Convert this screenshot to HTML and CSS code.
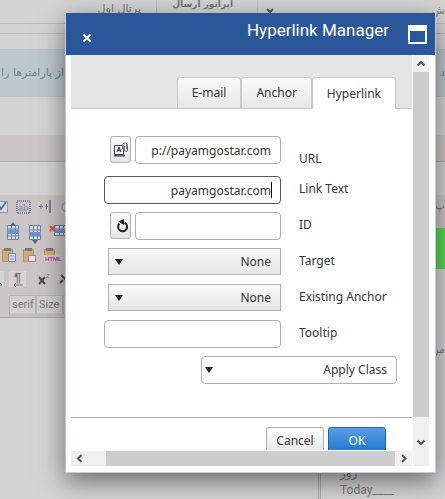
FILE: index.html
```html
<!DOCTYPE html>
<html lang="fa">
<head>
<meta charset="utf-8">
<title>Hyperlink Manager</title>
<link rel="stylesheet" href="styles.css">
</head>
<body>
<main class="page">
  <div class="topbar" dir="rtl">
    <span class="top-item top-edge">ش</span>
    <svg class="top-chevron" viewBox="0 0 8 6"><path d="M1 1l3 3 3-3"/></svg>
    <strong class="top-item top-operator">اپراتور ارسال</strong>
    <span class="top-item top-portal">پرتال اول</span>
  </div>
  <div class="strip"></div>
  <div class="notice"><span dir="rtl">از پارامترها را</span><span>د</span></div>
  <div class="section-bar"></div>
  <div class="editor">
    <div class="tools">
      <svg class="tool-icons" viewBox="0 0 66 100">
        <g fill="none" stroke="#9297a3">
          <path d="M-4 6.500H7.500V17.500H-4" fill="#d8dade"/>
          <path d="M-2 9l3 5 5-7" stroke="#596e9d" stroke-width="2"/>
          <rect x="17" y="6" width="13" height="12" stroke="#6f7fa3" stroke-width="2" stroke-dasharray="1 1"/>
          <path d="M50 5V18" stroke="#7d8190" stroke-width="2"/>
          <path d="M39 11.500h4M45 11.500h3M41 9v5M46.500 9v5" stroke="#6476a8"/>
          <circle cx="67" cy="12" r="5"/>
        </g>
        <text x="18" y="16" class="glyph-ab">ab</text>
        <g stroke="#72809a">
          <path d="M7.500 30.500h11v14h-11zM29.500 30.500h11v14h-11zM54.500 30.500h12v10h-12z" fill="#d4dce4"/>
          <path d="M7 34h12M7 41h12M11.500 31v14M15.500 31v14M29 35h12M29 41h12M33.500 31v14M37.500 31v14M54 34h12M59.500 31v10M63.500 31v10" fill="none"/>
        </g>
        <path d="M7 35h12v4H7zM29 37h12v4H29zM54 35h13v3H54z" fill="#6d91ce"/>
        <path d="M13 27l3 4h-6zM35 49l3-4h-6z" fill="#4c6690"/>
        <path d="M50 31l5 5M55 31l-5 5" stroke="#d35842" stroke-width="2"/>
        <g fill="#d1af72" stroke="#ae9362">
          <path d="M2.500 54.500h10v12h-10zM23.500 54.500h10v12h-10zM44.500 54.500h10v12h-10z"/>
        </g>
        <path d="M4 53h7v3H4zM25 53h7v3h-7zM46 53h7v3h-7z" fill="#777c80"/>
        <path d="M8.500 58.500h7v8h-7z" fill="#dce5f0" stroke="#6b86ad"/>
        <path d="M10 61h4M10 64h4" stroke="#6b86ad"/>
        <path d="M28.500 60.500h7v6h-7z" fill="#eee0ec" stroke="#ae77b1"/>
        <path d="M44 60h16v7H44z" fill="#d4c9d3"/>
        <text x="45" y="66" class="glyph-html">HTML</text>
        <path d="M-5 76H4V92H-5zM9 76h17v16H9z" fill="#d3d3d1"/>
        <path d="M-3 90h5l-2-2" fill="none" stroke="#555"/>
        <text x="14" y="87" class="glyph-para">¶</text>
        <path d="M14 90h9m-9 0l2-2m-2 2l2 2" fill="none" stroke="#777"/>
        <path d="M39 82l6 7m0-7l-6 7M61 80l6 6M63 85l-3 3" stroke="#4c4c4c" stroke-width="2"/>
        <text x="46" y="83" class="glyph-sup">2</text>
      </svg>
      <div class="font-boxes"><span>serif</span><span>Size</span><span></span></div>
    </div>
    <div class="right-label" dir="rtl">پ</div>
  </div>
  <div class="green-tile"></div>
  <div class="lower"><p class="lower-note" dir="rtl">من</p>
    <div class="calendar"><span class="day" dir="rtl">روز</span><span>Today____</span></div>
  </div>
</main>

<section class="dialog" role="dialog" aria-labelledby="dialog-title">
  <header class="titlebar">
    <button class="close" type="button" aria-label="Close"><svg viewBox="0 0 10 10"><path d="M1.500 1.500l7 7M8.500 1.500l-7 7"/></svg></button>
    <h1 id="dialog-title">Hyperlink Manager</h1>
    <button class="maximize" type="button" aria-label="Maximize"></button>
  </header>
  <div class="frame">
    <div class="pane">
      <div class="tabs" role="tablist">
        <button type="button" class="tab" role="tab">E-mail</button>
        <button type="button" class="tab" role="tab">Anchor</button>
        <button type="button" class="tab selected" role="tab" aria-selected="true">Hyperlink</button>
      </div>
      <form class="form">
        <div class="field first">
          <div class="control">
            <button class="icon-button" type="button" aria-label="Document manager">
              <svg viewBox="0 0 16 16"><path d="M1.500 3.500h9v9h-9z" fill="#f4f6f8" stroke="#43484f"/><path d="M1 13.500h11" stroke="#555" stroke-width="2"/><path d="M4 10l2-5 2 5M4.500 8.500h3" fill="none" stroke="#23272e"/><path d="M9.500 7V3.500a2 2 0 0 1 5 0V8a1.500 1.500 0 0 1-3 0V4" fill="none" stroke="#5b6266"/><path d="M13.500 2v5" stroke="#3c8cc0"/><path d="M10.500 4v3" stroke="#db9a45"/></svg>
            </button>
            <input class="box short" id="url" type="text" value="p://payamgostar.com">
          </div>
          <label for="url">URL</label>
        </div>
        <div class="field">
          <div class="control caret"><input class="box focused" id="linktext" type="text" value="payamgostar.com"></div>
          <label for="linktext">Link Text</label>
        </div>
        <div class="field">
          <div class="control">
            <button class="icon-button reset" type="button" aria-label="Reset">
              <svg viewBox="0 0 16 16"><path d="M10.500 4.700a4.500 4.500 0 1 1-5 .8" fill="none" stroke="#222" stroke-width="2"/><path d="M4 3.500L10 1v6z" fill="#222"/></svg>
            </button>
            <input class="box short" id="id" type="text">
          </div>
          <label for="id">ID</label>
        </div>
        <div class="field">
          <div class="control"><span class="drop"><select id="target" dir="rtl"><option>None</option></select></span></div>
          <label for="target">Target</label>
        </div>
        <div class="field">
          <div class="control"><span class="drop"><select id="anchor" dir="rtl"><option>None</option></select></span></div>
          <label for="anchor">Existing Anchor</label>
        </div>
        <div class="field">
          <div class="control"><input class="box" id="tooltip" type="text"></div>
          <label for="tooltip">Tooltip</label>
        </div>
        <div class="class-row"><span class="drop plain"><select aria-label="Apply Class" dir="rtl"><option>Apply Class</option></select></span></div>
      </form>
      <footer class="actions">
        <button class="action" type="button">Cancel</button>
        <button class="action primary" type="button">OK</button>
      </footer>
    </div>
    <div class="vscroll" aria-hidden="true">
      <svg viewBox="0 0 16 17"><path d="M4.500 10.500L8 7l3.500 3.500"/></svg>
      <div class="thumb"></div>
      <svg class="down" viewBox="0 0 16 49"><path d="M4.500 23.500L8 27l3.500-3.500"/></svg>
    </div>
    <div class="hscroll" aria-hidden="true">
      <svg class="left" viewBox="0 0 35 15"><path d="M10.500 4L7 7.500 10.500 11"/></svg>
      <div class="thumb"></div>
      <svg class="right" viewBox="0 0 17 15"><path d="M7 4l3.500 3.500L7 11"/></svg>
    </div>
  </div>
</section>
</body>
</html>
```
FILE: styles.css
```css
* { box-sizing: border-box; }

body {
  margin: 0;
  min-height: 100vh;
  overflow: hidden;
  background: #d4d4d4;
  color: #333;
  font: 12px/18px "Noto Sans", sans-serif;
}

button, input, select { font: inherit; color: inherit; margin: 0; }

svg { display: block; }

/* Dimmed page behind the dialog */
.page {
  display: flex;
  flex-direction: column;
  height: 100vh;
  color: #777;
  font-family: "DejaVu Sans", sans-serif;
  font-size: 11px;
}

.topbar {
  display: flex;
  height: 24px;
  border-bottom: 1px solid #bcbcbc;
  overflow: hidden;
}

.top-edge { width: 171px; padding-top: 2px; }
.top-chevron { width: 8px; height: 6px; margin: 8px 0 0 8px; fill: none; stroke: #555; stroke-width: 2; }
.top-item { white-space: nowrap; }
.top-operator { width: 102px; padding-right: 24px; border-left: 1px solid #bcbcbc; border-right: 1px solid #c8c8c8; font-size: 9px; line-height: 8px; }
.top-portal { padding: 0 15px; }

.strip { height: 10px; border-bottom: 1px solid #bcbcbc; }

.notice {
  display: flex;
  justify-content: space-between;
  align-items: center;
  height: 48px;
  margin-top: 15px;
  border-block: 1px solid #b0c4c9;
  background: #bdc8cd;
  color: #6d8793;
  white-space: nowrap;
}

.notice span:first-child { width: 64px; }

.section-bar {
  height: 27px;
  margin-top: 38px;
  border-bottom: 1px solid #aaa;
  background: #cbc6c5;
}

.editor {
  display: flex;
  justify-content: space-between;
  height: 33px;
  margin-top: 33px;
  background: #cbc6c5;
}

.tools { width: 66px; height: 123px; border-bottom: 1px solid #aaa5a5; background: #cbc6c5; flex: none; }
.tool-icons { width: 66px; height: 100px; overflow: hidden; }
.glyph-ab { font: 11px "Liberation Serif", serif; fill: #7482a8; }
.glyph-html { font: bold 6px "Liberation Sans", sans-serif; fill: #a14394; }
.glyph-para { font: bold 13px "Liberation Sans", sans-serif; fill: #777; }
.glyph-sup { font: 6px "Liberation Sans", sans-serif; fill: #596e9d; }
.font-boxes { display: flex; padding-left: 9px; font: 11px/18px Roboto, sans-serif; }
.font-boxes span { width: 27px; height: 20px; padding-left: 2px; border: 1px solid #b7b5b4; background: #d1d0cf; flex: none; }
.font-boxes span:last-child { width: 21px; }
.right-label { width: 9px; padding-top: 2px; white-space: nowrap; }
.green-tile { align-self: flex-end; width: 10px; height: 41px; background: #5ad858; }
.lower { display: flex; flex-direction: column; flex: 1; align-items: flex-end; }
.lower-note { margin: 72px 0 0; }
.calendar {
  display: flex;
  flex: 1;
  flex-direction: column;
  justify-content: flex-end;
  width: 127px;
  padding-left: 19px;
  border-left: 3px double #aaa;
  font: 12px/17px Roboto, sans-serif;
}
.day { align-self: flex-start; font-family: "DejaVu Sans", sans-serif; }

/* Dialog */
.dialog {
  position: absolute;
  inset: 13px 9px 26px 65px;
  display: flex;
  flex-direction: column;
  border: 1px solid #bfcdd6;
  border-top: 0;
  background: #fff;
  box-shadow: 0 8px 24px rgba(0, 0, 0, .5);
}

.titlebar {
  display: flex;
  align-items: flex-start;
  height: 42px;
  padding: 12px 8px 0 15px;
  background: #2a579a;
  color: #fff;
}

.titlebar h1 {
  flex: 1;
  margin: -5px 19px 0 0;
  font: 17px/20px Roboto, sans-serif;
  text-align: right;
}

.close { width: 12px; height: 26px; padding: 0 1px; border: 0; background: none; }
.close svg { width: 10px; height: 10px; fill: none; stroke: #fff; stroke-width: 2; }
.maximize { width: 19px; height: 19px; padding: 0; border: 2px solid #fff; border-top-width: 6px; background: none; }

.frame {
  display: grid;
  grid-template: minmax(0, 1fr) 15px / minmax(0, 1fr) 16px;
  gap: 1px;
  flex: 1;
  min-height: 0;
  padding: 0 6px 6px 5px;
}

.pane { overflow: hidden; }

.tabs {
  display: flex;
  justify-content: flex-end;
  align-items: flex-end;
  height: 54px;
  padding-right: 16px;
  border-bottom: 1px solid #c8c8c8;
  background: #e5e5e5;
}

.tab {
  height: 31px;
  padding: 0 14px;
  border: 1px solid #c8c8c8;
  border-bottom: 0;
  border-radius: 3px 3px 0 0;
  background: linear-gradient(#fafafa, #e6e6e6);
}

.tab.selected { height: 32px; margin-bottom: -1px; background: #fff; }

.form { display: grid; gap: 8px; padding-top: 27px; }
.field { display: grid; grid-template-columns: 1fr 113px; gap: 18px; align-items: center; }
.field label { padding-bottom: 2px; }
.field.first { align-items: end; height: 32px; }
.field.first label { padding-bottom: 0; }
.field.first .control { align-self: start; }
.control { display: flex; justify-content: flex-end; gap: 4px; }

.box {
  width: 177px;
  height: 28px;
  padding: 0 9px;
  border: 1px solid #b0b0b0;
  border-radius: 4px;
  outline: 0;
  background: #fff;
  text-align: right;
}

.box.short { width: 146px; }
.box.focused { border-color: #555; }

.caret { position: relative; }
.caret::after { content: ""; position: absolute; top: 6px; right: 9px; width: 1px; height: 16px; background: #000; }

.icon-button {
  display: grid;
  place-items: center;
  width: 21px;
  height: 27px;
  padding: 0;
  border: 1px solid #b0b0b0;
  border-radius: 3px;
  background: linear-gradient(#fafafa, #e6e6e6);
}

.icon-button svg { width: 16px; height: 16px; }
.icon-button.reset { justify-items: end; }

.drop { position: relative; width: 173px; height: 27px; }
.drop select {
  width: 100%;
  height: 100%;
  padding: 0 9px;
  appearance: none;
  border: 1px solid #b0b0b0;
  border-radius: 0;
  background: linear-gradient(#fafafa, #e6e6e6);
}
.drop::after {
  content: "";
  position: absolute;
  left: 7px;
  top: 11px;
  border: 4px solid transparent;
  border-top: 6px solid #222;
  border-bottom: 0;
  pointer-events: none;
}
.control:has(.drop) { height: 28px; }
.drop.plain { width: 196px; height: 28px; }
.drop.plain::after { left: 4px; }
.drop.plain select { border-radius: 4px; background: #fff; }
.class-row { display: flex; justify-content: flex-end; padding-right: 15px; }

.actions {
  display: flex;
  justify-content: flex-end;
  gap: 4px;
  margin-top: 33px;
  padding: 9px 26px 0 0;
  border-top: 1px solid #b0b0b0;
}

.action {
  width: 58px;
  height: 28px;
  padding: 0;
  border: 1px solid #b0b0b0;
  border-radius: 3px;
  background: linear-gradient(#fdfdfd, #e6e6e6);
}

.action.primary { border-color: #1b65b5; background: linear-gradient(#5a9de0, #1b74d2); color: #fff; }

.vscroll, .hscroll { display: flex; background: #f0f0f0; }
.vscroll { grid-row: 1 / 3; grid-column: 2; flex-direction: column; }
.hscroll { grid-row: 2; grid-column: 1; }
.thumb { flex: 1; background: #cdcdcd; }
.vscroll svg, .hscroll svg { flex: none; width: 16px; height: 17px; fill: none; stroke: #555; stroke-width: 2; }
.vscroll .down { height: 49px; }
.hscroll .left { width: 35px; height: 15px; }
.hscroll .right { width: 17px; height: 15px; }
```
